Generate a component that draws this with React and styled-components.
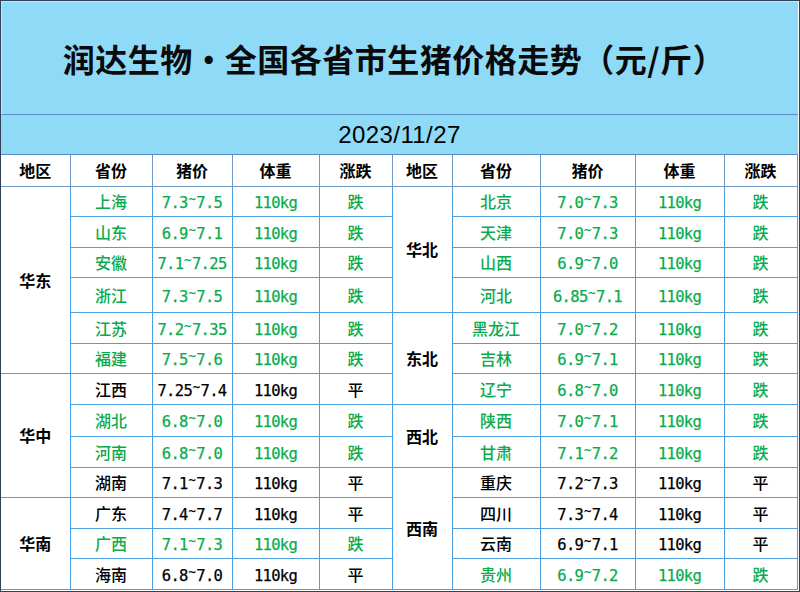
import React from "react";
import styled, { createGlobalStyle } from "styled-components";

const Global = createGlobalStyle`
  html, body { margin: 0; padding: 0; background: #ffffff; }
  body { font-family: "Noto Sans CJK SC", "Noto Sans", sans-serif; }
`;

const Frame = styled.div`
  width: 800px;
  height: 592px;
  box-sizing: border-box;
  border: 1px solid #2f4258;
  padding: 0 1px 1px 0;
  background: #ffffff;
  overflow: hidden;
`;

const TitleBand = styled.div`
  height: 114px;
  box-sizing: border-box;
  background: #8fdbf7;
  border-top: 1px solid #bfeafb;
  border-left: 1px solid #bfeafb;
  border-bottom: 1px solid #5a8fc6;
  display: flex;
  align-items: center;
  justify-content: center;
  padding-bottom: 1px;
`;

const Title = styled.h1`
  margin: 0 0 0 -12px;
  font-family: "Noto Sans CJK SC", sans-serif;
  font-weight: 700;
  font-size: 32px;
  letter-spacing: 0.5px;
  color: #0a0a0a;
  white-space: nowrap;
`;

const Dot = styled.span`
  display: inline-block;
  width: 1em;
  text-align: center;
`;

const DateBand = styled.div`
  height: 40px;
  box-sizing: border-box;
  background: #8fdbf7;
  border-bottom: 1px solid #5a8fc6;
  display: flex;
  align-items: center;
  justify-content: center;
  font-family: "Liberation Sans", Arial, sans-serif;
  font-size: 24px;
  letter-spacing: 0.4px;
  color: #000;
`;

const Table = styled.table`
  width: 796px;
  table-layout: fixed;
  border-collapse: collapse;
  border-spacing: 0;
`;

const HeadRow = styled.tr`
  height: 31px;
`;

const Th = styled.th`
  padding: 0;
  font-family: "Noto Sans CJK SC", sans-serif;
  font-weight: 700;
  font-size: 16px;
  color: #000;
  text-align: center;
  vertical-align: middle;
  border: 1px solid #6d97c4;
  border-top: none;
  &:first-child { border-left: none; }
`;

const Row = styled.tr`
  height: ${(p) => p.$h}px;
`;

const Td = styled.td`
  padding: 0;
  text-align: center;
  vertical-align: middle;
  border: 1px solid #4c9fdc;
  font-size: 16px;
  color: ${(p) => (p.$green ? "#0aab4c" : "#000")};
  &:first-child { border-left: none; }
`;

const RegionCell = styled(Td)`
  color: #000;
`;

const RegionName = styled.span`
  font-family: "Noto Sans CJK SC", sans-serif;
  font-weight: 700;
`;

const Name = styled.span`
  font-family: "Noto Sans CJK SC", sans-serif;
  font-weight: 500;
`;

const Mono = styled.span`
  font-family: "DejaVu Sans Mono", monospace;
  font-size: 15.5px;
  letter-spacing: -0.7px;
  -webkit-text-stroke: 0.25px currentColor;
`;

const Tilde = styled.span`
  display: inline-block;
  position: relative;
  top: -5px;
  font-size: 12px;
  width: 8.6px;
  letter-spacing: 0;
`;

const left = [
  { region: "华东", rows: [
    ["上海", "7.3", "7.5", "跌"],
    ["山东", "6.9", "7.1", "跌"],
    ["安徽", "7.1", "7.25", "跌"],
    ["浙江", "7.3", "7.5", "跌"],
    ["江苏", "7.2", "7.35", "跌"],
    ["福建", "7.5", "7.6", "跌"],
  ]},
  { region: "华中", rows: [
    ["江西", "7.25", "7.4", "平"],
    ["湖北", "6.8", "7.0", "跌"],
    ["河南", "6.8", "7.0", "跌"],
    ["湖南", "7.1", "7.3", "平"],
  ]},
  { region: "华南", rows: [
    ["广东", "7.4", "7.7", "平"],
    ["广西", "7.1", "7.3", "跌"],
    ["海南", "6.8", "7.0", "平"],
  ]},
];

const right = [
  { region: "华北", rows: [
    ["北京", "7.0", "7.3", "跌"],
    ["天津", "7.0", "7.3", "跌"],
    ["山西", "6.9", "7.0", "跌"],
    ["河北", "6.85", "7.1", "跌"],
  ]},
  { region: "东北", rows: [
    ["黑龙江", "7.0", "7.2", "跌"],
    ["吉林", "6.9", "7.1", "跌"],
    ["辽宁", "6.8", "7.0", "跌"],
  ]},
  { region: "西北", rows: [
    ["陕西", "7.0", "7.1", "跌"],
    ["甘肃", "7.1", "7.2", "跌"],
  ]},
  { region: "西南", rows: [
    ["重庆", "7.2", "7.3", "平"],
    ["四川", "7.3", "7.4", "平"],
    ["云南", "6.9", "7.1", "平"],
    ["贵州", "6.9", "7.2", "跌"],
  ]},
];

const heights = [30, 31, 30, 35, 31, 30, 31, 32, 31, 30, 31, 30, 31];

function flatten(groups) {
  const out = [];
  groups.forEach((g) => {
    g.rows.forEach((r, i) => {
      out.push({ region: i === 0 ? g.region : null, span: g.rows.length, row: r });
    });
  });
  return out;
}

const L = flatten(left);
const R = flatten(right);

function SideCells({ item }) {
  const [name, lo, hi, trend] = item.row;
  const green = trend === "跌";
  return (
    <>
      {item.region && (
        <RegionCell rowSpan={item.span}>
          <RegionName>{item.region}</RegionName>
        </RegionCell>
      )}
      <Td $green={green}><Name>{name}</Name></Td>
      <Td $green={green}>
        <Mono>{lo}<Tilde>~</Tilde>{hi}</Mono>
      </Td>
      <Td $green={green}><Mono>110kg</Mono></Td>
      <Td $green={green}><Name>{trend}</Name></Td>
    </>
  );
}

const headers = ["地区", "省份", "猪价", "体重", "涨跌"];
const widths = [69, 82, 80, 87, 73, 60, 88, 95, 89, 73];

export default function App() {
  return (
    <>
      <Global />
      <Frame>
        <TitleBand>
          <Title>润达生物<Dot>·</Dot>全国各省市生猪价格走势（元/斤）</Title>
        </TitleBand>
        <DateBand>2023/11/27</DateBand>
        <Table>
          <colgroup>
            {widths.map((w, i) => <col key={i} width={w} />)}
          </colgroup>
          <thead>
            <HeadRow>
              {[...headers, ...headers].map((h, i) => <Th key={i}>{h}</Th>)}
            </HeadRow>
          </thead>
          <tbody>
            {heights.map((h, i) => (
              <Row key={i} $h={h}>
                <SideCells item={L[i]} />
                <SideCells item={R[i]} />
              </Row>
            ))}
          </tbody>
        </Table>
      </Frame>
    </>
  );
}
